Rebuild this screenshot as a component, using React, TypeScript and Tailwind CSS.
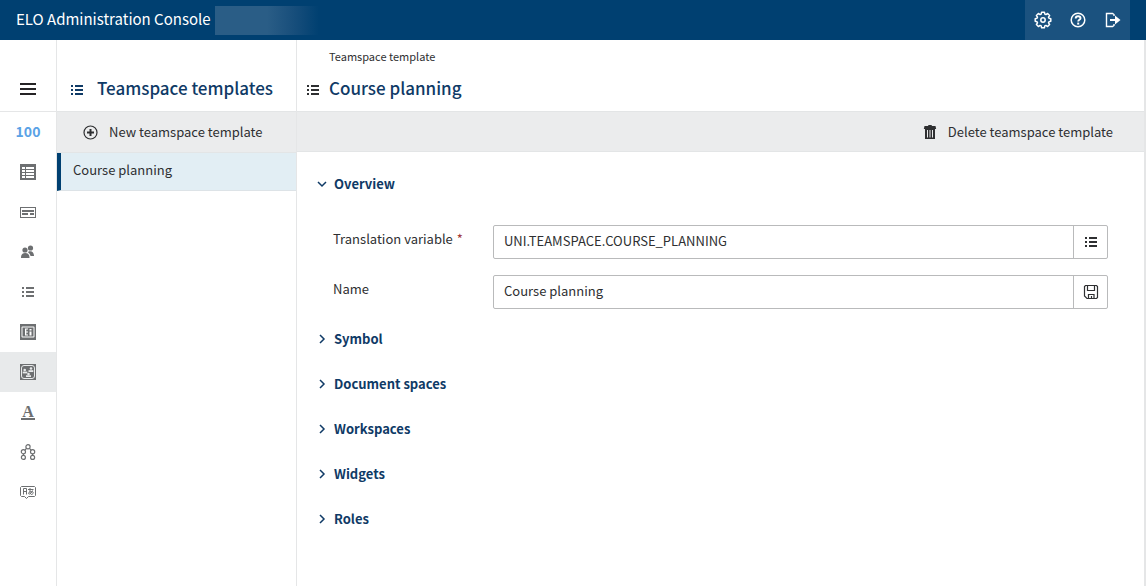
import { useState } from "react";
import type { ReactNode } from "react";

function Icon({ children, className = "size-4" }: { children: ReactNode; className?: string }) {
  return (
    <svg viewBox="0 0 16 16" fill="currentColor" aria-hidden="true" className={`shrink-0 ${className}`}>
      {children}
    </svg>
  );
}

function ListIcon({ className }: { className?: string }) {
  return (
    <Icon className={className}>
      <path d="M2 3h2v2H2zM6 3h8v2H6zM2 7h2v2H2zM6 7h8v2H6zM2 11h2v2H2zM6 11h8v2H6z" />
    </Icon>
  );
}

function GearIcon() {
  return (
    <svg viewBox="0 0 18 18" fill="none" stroke="currentColor" strokeWidth="1.5" strokeLinejoin="round" aria-hidden="true" className="size-[18px]">
      <path d="M7.6 1.2h2.8l.4 1.9 1.1.5 1.7-1.1 2 2-1.1 1.6.5 1.2 1.8.4v2.6l-1.8.4-.5 1.2 1.1 1.6-2 2-1.7-1.1-1.1.5-.4 1.9H7.6l-.4-1.9-1.1-.5-1.7 1.1-2-2 1.1-1.6-.5-1.2-1.8-.4V7.7l1.8-.4.5-1.2-1.1-1.6 2-2 1.7 1.1 1.1-.5z" />
      <circle cx="9" cy="9" r="2.2" />
    </svg>
  );
}

function HelpIcon() {
  return (
    <Icon>
      <circle cx="8" cy="8" r="6.8" fill="none" stroke="currentColor" strokeWidth="1.5" />
      <path d="M5.7 6.4c0-1.4 1-2.2 2.4-2.2s2.4.8 2.4 2c0 1.6-2.3 1.700-2.300 3.300" fill="none" stroke="currentColor" strokeWidth="1.9" />
      <path d="M7.200 10.600h2v2h-2z" />
    </Icon>
  );
}

function LogoutIcon() {
  return (
    <Icon>
      <path d="M9 4V2.500L7.500 1.500H1.500v13h6L9 13.500V12" fill="none" stroke="currentColor" strokeWidth="1.400" />
      <path d="M5 7h5V3.500L15.500 8 10 12.500V9H5z" />
    </Icon>
  );
}

const navItems: { label: string; active?: boolean; icon: ReactNode }[] = [
  { label: "Numbers", icon: <span className="pb-[2px] text-sm font-bold text-[#5aa2e6]">100</span> },
  {
    label: "Tables",
    icon: (
      <Icon>
        <path fillRule="evenodd" d="M0 0h16v16H0zM2 3v2h3V3zM6 3v2h8V3zM2 6v2h3V6zM6 6v2h8V6zM2 9v2h3V9zM6 9v2h8V9zM2 12v2h3v-2zM6 12v2h8v-2z" />
      </Icon>
    ),
  },
  {
    label: "Forms",
    icon: (
      <Icon>
        <path fillRule="evenodd" d="M0 3h16v11H0zM1 4v9h14V4z" />
        <path d="M2 6h12v2H2zM2 9h6v2H2zM10 9h4v2h-4z" />
      </Icon>
    ),
  },
  {
    label: "Users",
    icon: (
      <Icon>
        <circle cx="10.500" cy="4" r="2.600" />
        <path d="M8.500 7.500c3-1 5.500.3 5.500 4.500h-3.500c-.3-1.700-1-2.700-2.300-3.300z" />
        <circle cx="5" cy="6" r="2.600" />
        <path d="M1 14c0-3.500 1.300-5 4.200-5s4.300 1.500 4.300 5z" />
      </Icon>
    ),
  },
  { label: "Lists", icon: <ListIcon /> },
  {
    label: "Metadata",
    icon: (
      <Icon>
        <path fillRule="evenodd" d="M0 0h16v16H0zM2.500 2.500a1 1 0 0 0-1 1v9a1 1 0 0 0 1 1h11a1 1 0 0 0 1-1v-9a1 1 0 0 0-1-1z" />
        <path fillRule="evenodd" d="M2.500 3.500h11v9h-11zM5 4.500v7h3v-1H6.300v-2H8v-1H6.300v-2H8v-1zM9.500 5v1.500h2V5zM9.500 7.500v4h2v-4z" />
      </Icon>
    ),
  },
  {
    label: "Teamspace templates",
    active: true,
    icon: (
      <Icon>
        <path d="M0 0h16v16H0z" />
        <rect x="1.500" y="1.500" width="13" height="13" rx="2.500" fill="none" stroke="#e8eaeb" />
        <g fill="#e8eaeb">
          <circle cx="11" cy="4.500" r="1.300" />
          <path d="M8.500 8V6.200h4.800V8z" />
          <circle cx="4.700" cy="6" r="1.300" />
          <path d="M2.700 9.400V7.600h4.600v1.800z" />
          <circle cx="8.500" cy="10" r="1.300" />
          <path d="M6 13v-1.700h5V13z" />
        </g>
      </Icon>
    ),
  },
  {
    label: "Fonts",
    icon: (
      <span className="h-[15px] w-[14px] border-b-2 border-current text-center font-['Liberation_Serif',serif] text-base leading-[14px] font-bold">
        A
      </span>
    ),
  },
  {
    label: "Structure",
    icon: (
      <Icon>
        <g fill="none" stroke="currentColor" strokeWidth="1.200">
          <circle cx="8" cy="2.800" r="2.100" />
          <circle cx="3.400" cy="7.700" r="2.100" />
          <circle cx="12.600" cy="7.700" r="2.100" />
          <circle cx="3.400" cy="13.400" r="2" />
          <circle cx="12.600" cy="13.400" r="2" />
          <path d="M6.500 4.300 4.900 6.200M9.500 4.300l1.600 1.900M3.400 9.800v1.600M12.600 9.800v1.600" />
        </g>
      </Icon>
    ),
  },
  {
    label: "Translations",
    icon: (
      <Icon>
        <g fill="none" stroke="currentColor">
          <path d="M1.500 2.500h13l1 1v8l-1 1h-6l-2 2-2-2h-3l-1-1v-8z" />
          <path d="M3.500 10.500v-6h3v6M3.500 7.500h3M8 5.500h5.500M10 4v3.500c0 1.500.5 2.500 1.500 3M12.500 6.500c-1 2.500-2 3.500-3.200 3.500-1.300 0-1-2 1.200-2.300 2.500-.4 3.300.8 2.500 1.800-.4.600-1 .9-1.500 1" />
        </g>
      </Icon>
    ),
  },
];

function Chevron({ open }: { open: boolean }) {
  return (
    <svg viewBox="0 0 10 10" fill="none" stroke="currentColor" strokeWidth="1.500" aria-hidden="true" className="size-[10px] shrink-0">
      <path d={open ? "M1 3l4 4 4-4" : "M3 1l4 4-4 4"} />
    </svg>
  );
}

function Section({ title, defaultOpen = false, children }: { title: string; defaultOpen?: boolean; children?: ReactNode }) {
  const [open, setOpen] = useState(defaultOpen);

  return (
    <section>
      <button
        type="button"
        aria-expanded={open}
        onClick={() => setOpen(!open)}
        className="flex h-[45px] items-center gap-[7px] pb-px font-bold text-[#0f3a66]"
      >
        <Chevron open={open} />
        {title}
      </button>
      {open && children}
    </section>
  );
}

function Field({ id, label, required, value, action, icon }: {
  id: string;
  label: string;
  required?: boolean;
  value: string;
  action: string;
  icon: ReactNode;
}) {
  return (
    <div className="flex">
      <label htmlFor={id} className="w-40 shrink-0 pt-1 leading-5">
        {label}
        {required && <span className="ml-1 text-[#a33a3a]">*</span>}
      </label>
      <div className="flex h-[34px] min-w-0 flex-1 rounded-xs border border-[#b9babb]">
        <input id={id} type="text" defaultValue={value} className="min-w-0 flex-1 px-[10px] pb-[2px] outline-none" />
        <button type="button" aria-label={action} className="flex w-[34px] items-center justify-center border-l border-[#b9babb]">
          {icon}
        </button>
      </div>
    </div>
  );
}

export default function App() {
  return (
    <div className="flex min-h-screen flex-col bg-white font-['Noto_Sans_CJK_SC',sans-serif] text-[13px] leading-5 text-[#2e2f31]">
      <header className="flex h-10 items-center bg-[#004071] pr-4 pl-4 text-white">
        <h1 className="pb-[2px] text-[15px] leading-6 font-normal">ELO Administration Console</h1>
        <div className="ml-1 h-[29px] w-[104px] bg-linear-to-r from-[#2a5d86] from-50% to-[#004071]" />
        <div className="ml-auto flex h-10 bg-[#1b527f]">
          <button type="button" aria-label="Settings" className="flex w-[35px] items-center justify-center">
            <GearIcon />
          </button>
          <button type="button" aria-label="Help" className="flex w-[35px] items-center justify-center">
            <HelpIcon />
          </button>
          <button type="button" aria-label="Log out" className="flex w-[35px] items-center justify-center">
            <LogoutIcon />
          </button>
        </div>
      </header>

      <div className="flex flex-1">
        <nav className="w-[57px] shrink-0 border-r border-[#e5e6e7] text-[#6d6f71]">
          <div className="flex h-[72px] items-end border-b border-[#e5e6e7] pb-[14px] pl-5">
            <button type="button" aria-label="Menu" className="text-[#252325]">
              <Icon>
                <path d="M0 2h16v2H0zM0 7h16v2H0zM0 12h16v2H0z" />
              </Icon>
            </button>
          </div>
          {navItems.map((item) => (
            <button
              key={item.label}
              type="button"
              aria-label={item.label}
              className={`flex h-10 w-full items-center justify-center ${item.active ? "bg-[#e8eaeb]" : ""}`}
            >
              {item.icon}
            </button>
          ))}
        </nav>

        <aside className="w-60 shrink-0 border-r border-[#e5e6e7]">
          <div className="flex h-[71px] items-end gap-3 pb-[11px] pl-3 text-[#0f3a66]">
            <ListIcon className="mb-[2px] size-4" />
            <h2 className="text-[17px] leading-6 font-medium">Teamspace templates</h2>
          </div>
          <div className="flex h-[42px] items-center border-y border-[#e3e5e6] bg-[#ebeced] pl-[25px]">
            <button type="button" className="flex items-center gap-[11px]">
              <Icon>
                <circle cx="8.500" cy="8.500" r="6.500" fill="none" stroke="currentColor" strokeWidth="1.200" />
                <path d="M7.500 5h2v2.500H12v2H9.500V12h-2V9.500H5v-2h2.500z" />
              </Icon>
              New teamspace template
            </button>
          </div>
          <button type="button" className="flex h-[38px] w-full items-center border-b border-l-4 border-b-[#dde3e7] border-l-[#004071] bg-[#e2eef4] pb-[3px] pl-3">
            Course planning
          </button>
        </aside>

        <main className="min-w-0 flex-1 border-r-2 border-[#e5e6e7]">
          <div className="flex h-[71px] flex-col justify-between pt-2 pb-[11px] pl-2">
            <p className="pl-6 text-[11px] leading-4">Teamspace template</p>
            <div className="flex items-end gap-2">
              <ListIcon className="mb-[2px] size-4" />
              <h2 className="text-[17px] leading-6 font-medium text-[#0f3a66]">Course planning</h2>
            </div>
          </div>
          <div className="flex h-[41px] items-center justify-end border-y border-[#e3e5e6] bg-[#ebeced] pr-[31px]">
            <button type="button" className="flex items-center gap-[10px]">
              <Icon>
                <path d="M6.500 1h3l.5 1h3.500l.7 3H1.800l.7-3H6z" />
                <path fillRule="evenodd" d="M3 5h10v10H3zM5 6v7.500h1V6zM7.500 6v7.500h1V6zM10 6v7.500h1V6z" />
              </Icon>
              Delete teamspace template
            </button>
          </div>
          <div className="pt-[10px] pr-9 pl-5">
            <Section title="Overview" defaultOpen>
              <div className="flex flex-col gap-4 pt-[18px] pb-2 pl-4">
                <Field
                  id="translation-variable"
                  label="Translation variable"
                  required
                  value="UNI.TEAMSPACE.COURSE_PLANNING"
                  action="Select translation variable"
                  icon={<ListIcon />}
                />
                <Field
                  id="name"
                  label="Name"
                  value="Course planning"
                  action="Save name"
                  icon={
                    <Icon>
                      <g fill="none" stroke="currentColor" strokeWidth="1.200">
                        <path d="M2.500 1.500h11l1 1v11l-1 1H4l-2.500-2.500v-9.500z" />
                        <path d="M4.500 1.500v5h7v-5M5.500 14.500v-4h5.500v4M8.500 12v2" />
                      </g>
                    </Icon>
                  }
                />
              </div>
            </Section>
            <Section title="Symbol" />
            <Section title="Document spaces" />
            <Section title="Workspaces" />
            <Section title="Widgets" />
            <Section title="Roles" />
          </div>
        </main>
      </div>
    </div>
  );
}
